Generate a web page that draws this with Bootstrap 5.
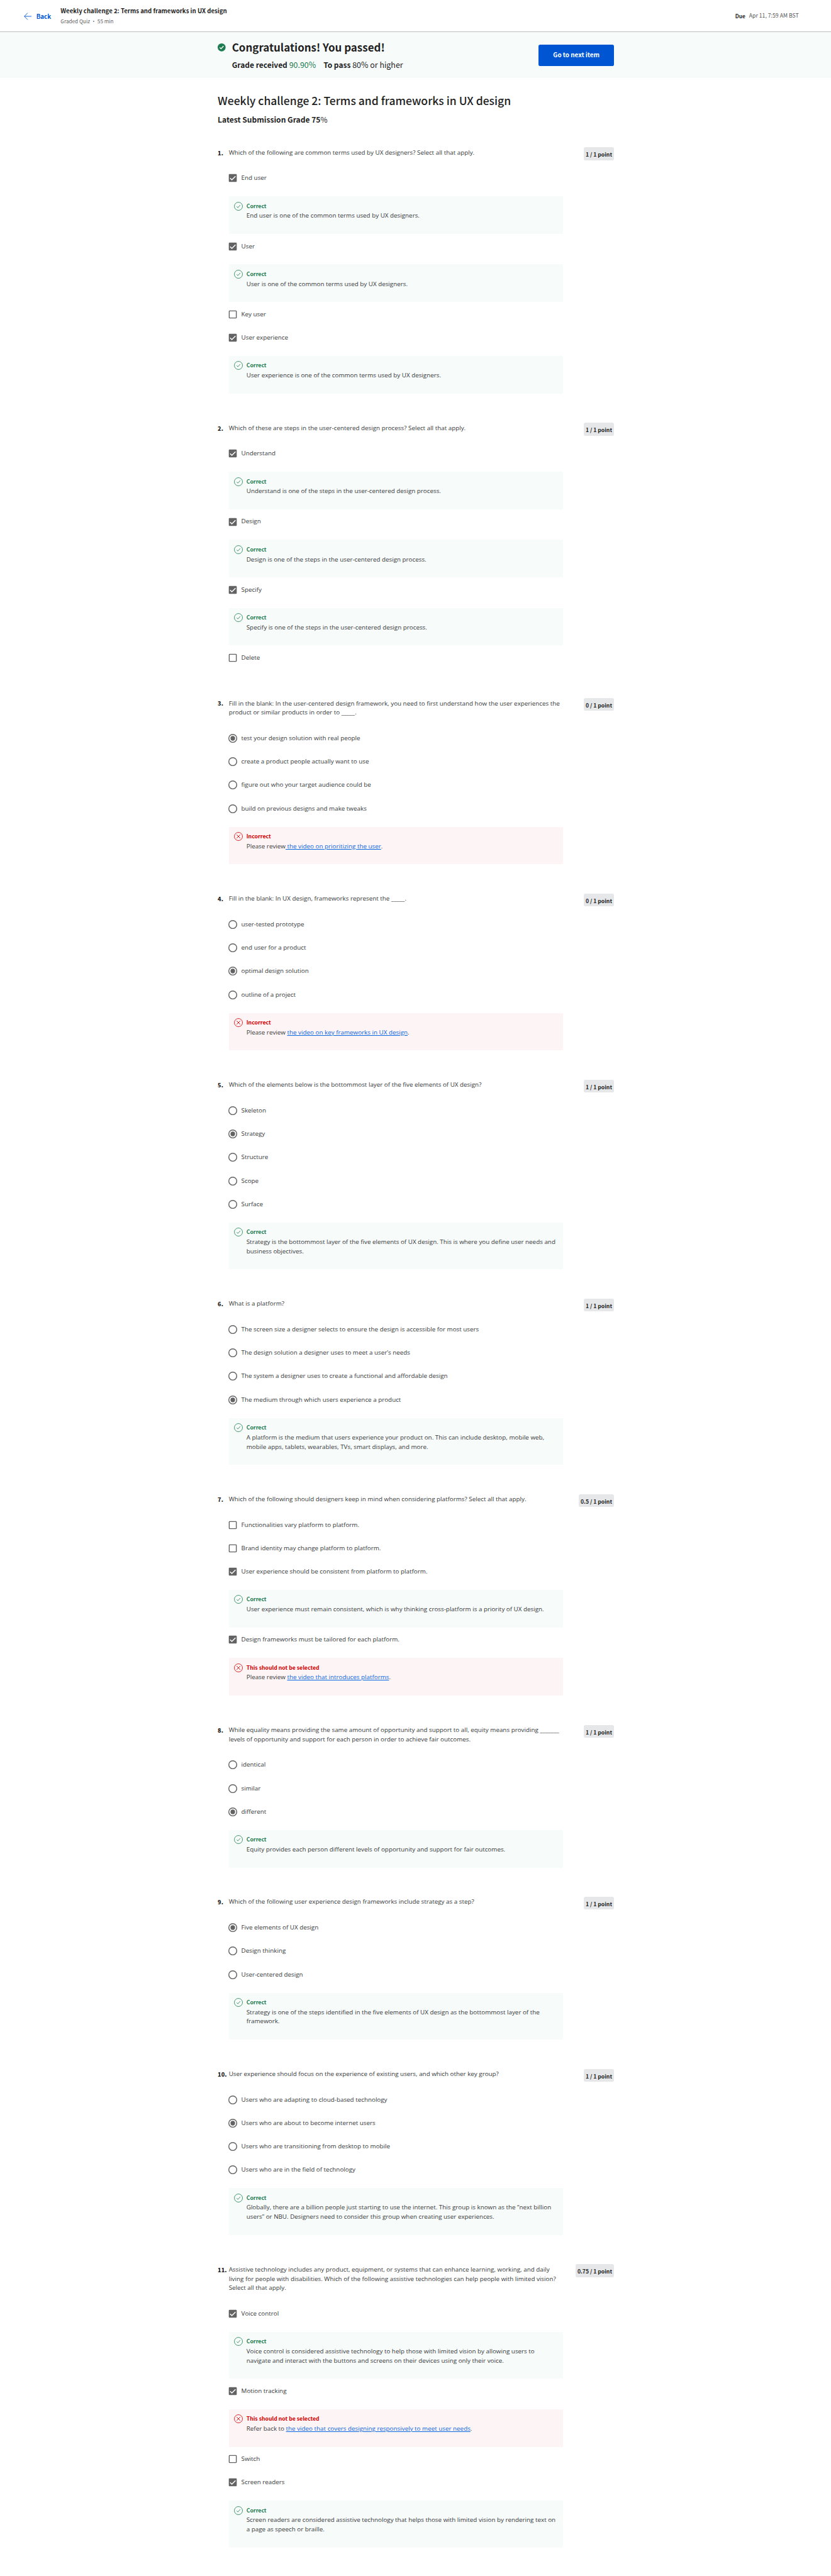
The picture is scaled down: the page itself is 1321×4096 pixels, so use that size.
<!DOCTYPE html>
<html lang="en">
<head>
<meta charset="utf-8">
<meta name="viewport" content="width=device-width, initial-scale=1">
<title>Weekly challenge 2: Terms and frameworks in UX design</title>
<link rel="stylesheet" href="https://cdn.jsdelivr.net/npm/bootstrap@5.3.0/dist/css/bootstrap.min.css">
<style>
:root{--u:.70306px;--head:"Noto Sans CJK SC","Noto Sans",sans-serif}
body{font-family:"Open Sans","Noto Sans",sans-serif;font-size:calc(14*var(--u));line-height:calc(21*var(--u));color:#373a3c;background:#fff;overflow-x:hidden}
.topbar{height:calc(73*var(--u));border-bottom:1px solid #bdbdbd;font-family:var(--head);padding:1px calc(73*var(--u)) 0 calc(54.5*var(--u))}
.back-link{color:#0056d2;font-weight:700;font-size:9.8px;width:calc(82.5*var(--u));gap:calc(10.5*var(--u));padding-top:1px}
.back-link svg{width:calc(17*var(--u));height:calc(17*var(--u))}
.bar-title{font-weight:700;font-size:9.64px;line-height:calc(22*var(--u));color:#1f1f1f}
.bar-sub{font-size:8.17px;line-height:calc(22*var(--u));color:#636363;padding-top:.4px}
.due{font-size:8.7px;color:#555;gap:calc(8.5*var(--u))}
.due b{font-size:8.3px;color:#1f1f1f}
.banner{height:calc(104*var(--u));background:#f7fbfa;font-family:var(--head);color:#1f1f1f}
.page{width:calc(896.5*var(--u));margin-left:calc(491.7*var(--u));padding-left:calc(.6*var(--u))}
.pass-icon{width:calc(18*var(--u));height:calc(18*var(--u));margin:calc(25.5*var(--u)) calc(14.2*var(--u)) 0 0}
.pass-title{font-size:16.95px;font-weight:700;line-height:calc(32*var(--u));margin:calc(18*var(--u)) 0 calc(12*var(--u))}
.pass-line{font-size:12.45px;line-height:calc(24*var(--u));white-space:nowrap}
.pass-line b{font-size:12px;font-weight:700}
.pass-line .got{color:#1d7c50;margin-right:calc(17*var(--u))}
.next-btn{width:calc(170*var(--u));height:calc(48*var(--u));background:#0056d2;border-radius:calc(4*var(--u));font:700 9.88px/1 var(--head);color:#fff;padding:1px 0 0;border:0}
.quiz-title{font:500 17.52px/calc(36*var(--u)) var(--head);color:#1f1f1f;margin:calc(31.5*var(--u)) 0 calc(11.8*var(--u))}
.quiz-grade{font:700 12.06px/calc(28*var(--u)) var(--head);color:#1f1f1f;margin:0 0 calc(48.9*var(--u))}
.quiz-grade span{font-weight:400}
.question{padding-bottom:calc(66.15*var(--u))}
.q-num{width:calc(25*var(--u));flex:none;font:900 9.1px/calc(21*var(--u)) var(--head);color:#1f1f1f;padding-top:calc(2*var(--u));white-space:nowrap}
.q-body{width:calc(756*var(--u));flex:none}
.prompt{margin:0;padding:calc(.7*var(--u)) 0 calc(20.3*var(--u));white-space:nowrap}
.points{height:calc(29*var(--u));background:#e5e7e8;border-radius:calc(4*var(--u));font:700 8.64px/calc(29*var(--u)) var(--head);color:#1f1f1f;padding:1px calc(4.2*var(--u)) 0;white-space:nowrap}
.choice{height:calc(53*var(--u));padding-top:calc(3*var(--u));margin-left:calc(-1.2*var(--u));gap:calc(9.5*var(--u));white-space:nowrap}
.choice svg{width:calc(20*var(--u));height:calc(20*var(--u));flex:none}
.choice span{margin-top:calc(-2*var(--u))}
.feedback{margin-top:calc(16*var(--u));padding:calc(12*var(--u)) 0 calc(31*var(--u)) calc(12*var(--u));gap:calc(8*var(--u));white-space:nowrap}
.feedback svg{width:calc(20*var(--u));height:calc(20*var(--u));flex:none}
.feedback strong{display:block;font:700 8.7px/calc(21*var(--u)) var(--head)}
.feedback p{margin:0}
.ok{background:#f7fbfa}.ok strong,.ok svg{color:#1d7c50}
.bad{background:#fdf4f5}.bad strong,.bad svg{color:#d30001}
.feedback a{color:#0a68e0;text-decoration:underline}
</style>
<script src="https://cdn.jsdelivr.net/npm/bootstrap@5.3.0/dist/js/bootstrap.bundle.min.js"></script>
</head>
<body>
<svg class="d-none">
<symbol id="box1" viewBox="0 0 20 20"><rect x="1" y="1" width="18" height="18" rx="1.8" fill="#636363"/><path d="M4 10.2l4 4L16.2 6" fill="none" stroke="#fff" stroke-width="2.1"/></symbol>
<symbol id="box0" viewBox="0 0 20 20"><rect x="2" y="2" width="16" height="16" rx="1" fill="#fff" stroke="#636363" stroke-width="2"/></symbol>
<symbol id="dot0" viewBox="0 0 20 20"><circle cx="10" cy="10" r="9" fill="#fff" stroke="#636363" stroke-width="2"/></symbol>
<symbol id="dot1" viewBox="0 0 20 20"><circle cx="10" cy="10" r="9" fill="#fff" stroke="#636363" stroke-width="2"/><circle cx="10" cy="10" r="5.2" fill="#636363"/></symbol>
<symbol id="yes" viewBox="0 0 20 20"><g fill="none" stroke="currentColor" stroke-width="1.15"><circle cx="10" cy="10" r="9.2"/><path d="M6 10.4l2.8 2.7 5.2-5.9"/></g></symbol>
<symbol id="no" viewBox="0 0 20 20"><g fill="none" stroke="currentColor" stroke-width="1.2"><circle cx="10" cy="10" r="9.2"/><path d="M5.9 5.9l8.2 8.2M14.1 5.9l-8.2 8.2"/></g></symbol>
</svg>

<header class="topbar d-flex align-items-center">
<a class="back-link d-flex align-items-center text-decoration-none" href="#"><svg viewBox="0 0 17 17" fill="none" stroke="currentColor" stroke-width="1.3"><path d="M17 8.5H1M8.5.8L.9 8.5l7.6 7.7"/></svg>Back</a>
<div><div class="bar-title">Weekly challenge 2: Terms and frameworks in UX design</div><div class="bar-sub">Graded Quiz • 55 min</div></div>
<div class="due d-flex align-items-center ms-auto"><b>Due</b><span>Apr 11, 7:59 AM BST</span></div>
</header>

<div class="banner"><div class="page d-flex h-100">
<svg class="pass-icon" viewBox="0 0 18 18"><circle cx="9" cy="9" r="9" fill="#1d7c50"/><path d="M4.7 9.2l3 3 5.6-6" fill="none" stroke="#fff" stroke-width="2"/></svg>
<div><h2 class="pass-title">Congratulations! You passed!</h2><div class="pass-line"><b>Grade received</b> <span class="got">90.90%</span><b>To pass</b> 80% or higher</div></div>
<button class="btn next-btn ms-auto align-self-center" type="button">Go to next item</button>
</div></div>

<main class="page">
<h1 class="quiz-title">Weekly challenge 2: Terms and frameworks in UX design</h1>
<h2 class="quiz-grade">Latest Submission Grade 75<span>%</span></h2>

<section class="question d-flex align-items-start"><div class="q-num">1.</div><div class="q-body">
<p class="prompt">Which of the following are common terms used by UX designers? Select all that apply.</p>
<div class="choice d-flex align-items-center"><svg><use href="#box1"/></svg><span>End user</span></div>
<div class="feedback ok d-flex"><svg><use href="#yes"/></svg><div><strong>Correct</strong><p>End user is one of the common terms used by UX designers.</p></div></div>
<div class="choice d-flex align-items-center"><svg><use href="#box1"/></svg><span>User</span></div>
<div class="feedback ok d-flex"><svg><use href="#yes"/></svg><div><strong>Correct</strong><p>User is one of the common terms used by UX designers.</p></div></div>
<div class="choice d-flex align-items-center"><svg><use href="#box0"/></svg><span>Key user</span></div>
<div class="choice d-flex align-items-center"><svg><use href="#box1"/></svg><span>User experience</span></div>
<div class="feedback ok d-flex"><svg><use href="#yes"/></svg><div><strong>Correct</strong><p>User experience is one of the common terms used by UX designers.</p></div></div>
</div><div class="points ms-auto">1 / 1 point</div></section>

<section class="question d-flex align-items-start"><div class="q-num">2.</div><div class="q-body">
<p class="prompt">Which of these are steps in the user-centered design process? Select all that apply.</p>
<div class="choice d-flex align-items-center"><svg><use href="#box1"/></svg><span>Understand</span></div>
<div class="feedback ok d-flex"><svg><use href="#yes"/></svg><div><strong>Correct</strong><p>Understand is one of the steps in the user-centered design process.</p></div></div>
<div class="choice d-flex align-items-center"><svg><use href="#box1"/></svg><span>Design</span></div>
<div class="feedback ok d-flex"><svg><use href="#yes"/></svg><div><strong>Correct</strong><p>Design is one of the steps in the user-centered design process.</p></div></div>
<div class="choice d-flex align-items-center"><svg><use href="#box1"/></svg><span>Specify</span></div>
<div class="feedback ok d-flex"><svg><use href="#yes"/></svg><div><strong>Correct</strong><p>Specify is one of the steps in the user-centered design process.</p></div></div>
<div class="choice d-flex align-items-center"><svg><use href="#box0"/></svg><span>Delete</span></div>
</div><div class="points ms-auto">1 / 1 point</div></section>

<section class="question d-flex align-items-start"><div class="q-num">3.</div><div class="q-body">
<p class="prompt">Fill in the blank: In the user-centered design framework, you need to first understand how the user experiences the<br>product or similar products in order to _____.</p>
<div class="choice d-flex align-items-center"><svg><use href="#dot1"/></svg><span>test your design solution with real people</span></div>
<div class="choice d-flex align-items-center"><svg><use href="#dot0"/></svg><span>create a product people actually want to use</span></div>
<div class="choice d-flex align-items-center"><svg><use href="#dot0"/></svg><span>figure out who your target audience could be</span></div>
<div class="choice d-flex align-items-center"><svg><use href="#dot0"/></svg><span>build on previous designs and make tweaks</span></div>
<div class="feedback bad d-flex"><svg><use href="#no"/></svg><div><strong>Incorrect</strong><p>Please review<a href="#"> the video on prioritizing the user</a>.</p></div></div>
</div><div class="points ms-auto">0 / 1 point</div></section>

<section class="question d-flex align-items-start"><div class="q-num">4.</div><div class="q-body">
<p class="prompt">Fill in the blank: In UX design, frameworks represent the _____.</p>
<div class="choice d-flex align-items-center"><svg><use href="#dot0"/></svg><span>user-tested prototype</span></div>
<div class="choice d-flex align-items-center"><svg><use href="#dot0"/></svg><span>end user for a product</span></div>
<div class="choice d-flex align-items-center"><svg><use href="#dot1"/></svg><span>optimal design solution</span></div>
<div class="choice d-flex align-items-center"><svg><use href="#dot0"/></svg><span>outline of a project</span></div>
<div class="feedback bad d-flex"><svg><use href="#no"/></svg><div><strong>Incorrect</strong><p>Please review <a href="#">the video on key frameworks in UX design</a>.</p></div></div>
</div><div class="points ms-auto">0 / 1 point</div></section>

<section class="question d-flex align-items-start"><div class="q-num">5.</div><div class="q-body">
<p class="prompt">Which of the elements below is the bottommost layer of the five elements of UX design?</p>
<div class="choice d-flex align-items-center"><svg><use href="#dot0"/></svg><span>Skeleton</span></div>
<div class="choice d-flex align-items-center"><svg><use href="#dot1"/></svg><span>Strategy</span></div>
<div class="choice d-flex align-items-center"><svg><use href="#dot0"/></svg><span>Structure</span></div>
<div class="choice d-flex align-items-center"><svg><use href="#dot0"/></svg><span>Scope</span></div>
<div class="choice d-flex align-items-center"><svg><use href="#dot0"/></svg><span>Surface</span></div>
<div class="feedback ok d-flex"><svg><use href="#yes"/></svg><div><strong>Correct</strong><p>Strategy is the bottommost layer of the five elements of UX design. This is where you define user needs and<br>business objectives.</p></div></div>
</div><div class="points ms-auto">1 / 1 point</div></section>

<section class="question d-flex align-items-start"><div class="q-num">6.</div><div class="q-body">
<p class="prompt">What is a platform?</p>
<div class="choice d-flex align-items-center"><svg><use href="#dot0"/></svg><span>The screen size a designer selects to ensure the design is accessible for most users</span></div>
<div class="choice d-flex align-items-center"><svg><use href="#dot0"/></svg><span>The design solution a designer uses to meet a user’s needs</span></div>
<div class="choice d-flex align-items-center"><svg><use href="#dot0"/></svg><span>The system a designer uses to create a functional and affordable design</span></div>
<div class="choice d-flex align-items-center"><svg><use href="#dot1"/></svg><span>The medium through which users experience a product</span></div>
<div class="feedback ok d-flex"><svg><use href="#yes"/></svg><div><strong>Correct</strong><p>A platform is the medium that users experience your product on. This can include desktop, mobile web,<br>mobile apps, tablets, wearables, TVs, smart displays, and more.</p></div></div>
</div><div class="points ms-auto">1 / 1 point</div></section>

<section class="question d-flex align-items-start"><div class="q-num">7.</div><div class="q-body">
<p class="prompt">Which of the following should designers keep in mind when considering platforms? Select all that apply.</p>
<div class="choice d-flex align-items-center"><svg><use href="#box0"/></svg><span>Functionalities vary platform to platform.</span></div>
<div class="choice d-flex align-items-center"><svg><use href="#box0"/></svg><span>Brand identity may change platform to platform.</span></div>
<div class="choice d-flex align-items-center"><svg><use href="#box1"/></svg><span>User experience should be consistent from platform to platform.</span></div>
<div class="feedback ok d-flex"><svg><use href="#yes"/></svg><div><strong>Correct</strong><p>User experience must remain consistent, which is why thinking cross-platform is a priority of UX design.</p></div></div>
<div class="choice d-flex align-items-center"><svg><use href="#box1"/></svg><span>Design frameworks must be tailored for each platform.</span></div>
<div class="feedback bad d-flex"><svg><use href="#no"/></svg><div><strong>This should not be selected</strong><p>Please review <a href="#">the video that introduces platforms</a>.</p></div></div>
</div><div class="points ms-auto">0.5 / 1 point</div></section>

<section class="question d-flex align-items-start"><div class="q-num">8.</div><div class="q-body">
<p class="prompt">While equality means providing the same amount of opportunity and support to all, equity means providing _______<br>levels of opportunity and support for each person in order to achieve fair outcomes.</p>
<div class="choice d-flex align-items-center"><svg><use href="#dot0"/></svg><span>identical</span></div>
<div class="choice d-flex align-items-center"><svg><use href="#dot0"/></svg><span>similar</span></div>
<div class="choice d-flex align-items-center"><svg><use href="#dot1"/></svg><span>different</span></div>
<div class="feedback ok d-flex"><svg><use href="#yes"/></svg><div><strong>Correct</strong><p>Equity provides each person different levels of opportunity and support for fair outcomes.</p></div></div>
</div><div class="points ms-auto">1 / 1 point</div></section>

<section class="question d-flex align-items-start"><div class="q-num">9.</div><div class="q-body">
<p class="prompt">Which of the following user experience design frameworks include strategy as a step?</p>
<div class="choice d-flex align-items-center"><svg><use href="#dot1"/></svg><span>Five elements of UX design</span></div>
<div class="choice d-flex align-items-center"><svg><use href="#dot0"/></svg><span>Design thinking</span></div>
<div class="choice d-flex align-items-center"><svg><use href="#dot0"/></svg><span>User-centered design</span></div>
<div class="feedback ok d-flex"><svg><use href="#yes"/></svg><div><strong>Correct</strong><p>Strategy is one of the steps identified in the five elements of UX design as the bottommost layer of the<br>framework.</p></div></div>
</div><div class="points ms-auto">1 / 1 point</div></section>

<section class="question d-flex align-items-start"><div class="q-num">10.</div><div class="q-body">
<p class="prompt">User experience should focus on the experience of existing users, and which other key group?</p>
<div class="choice d-flex align-items-center"><svg><use href="#dot0"/></svg><span>Users who are adapting to cloud-based technology</span></div>
<div class="choice d-flex align-items-center"><svg><use href="#dot1"/></svg><span>Users who are about to become internet users</span></div>
<div class="choice d-flex align-items-center"><svg><use href="#dot0"/></svg><span>Users who are transitioning from desktop to mobile</span></div>
<div class="choice d-flex align-items-center"><svg><use href="#dot0"/></svg><span>Users who are in the field of technology</span></div>
<div class="feedback ok d-flex"><svg><use href="#yes"/></svg><div><strong>Correct</strong><p>Globally, there are a billion people just starting to use the internet. This group is known as the “next billion<br>users” or NBU. Designers need to consider this group when creating user experiences.</p></div></div>
</div><div class="points ms-auto">1 / 1 point</div></section>

<section class="question d-flex align-items-start"><div class="q-num">11.</div><div class="q-body">
<p class="prompt">Assistive technology includes any product, equipment, or systems that can enhance learning, working, and daily<br>living for people with disabilities. Which of the following assistive technologies can help people with limited vision?<br>Select all that apply.</p>
<div class="choice d-flex align-items-center"><svg><use href="#box1"/></svg><span>Voice control</span></div>
<div class="feedback ok d-flex"><svg><use href="#yes"/></svg><div><strong>Correct</strong><p>Voice control is considered assistive technology to help those with limited vision by allowing users to<br>navigate and interact with the buttons and screens on their devices using only their voice.</p></div></div>
<div class="choice d-flex align-items-center"><svg><use href="#box1"/></svg><span>Motion tracking</span></div>
<div class="feedback bad d-flex"><svg><use href="#no"/></svg><div><strong>This should not be selected</strong><p>Refer back to <a href="#">the video that covers designing responsively to meet user needs</a>.</p></div></div>
<div class="choice d-flex align-items-center"><svg><use href="#box0"/></svg><span>Switch</span></div>
<div class="choice d-flex align-items-center"><svg><use href="#box1"/></svg><span>Screen readers</span></div>
<div class="feedback ok d-flex"><svg><use href="#yes"/></svg><div><strong>Correct</strong><p>Screen readers are considered assistive technology that helps those with limited vision by rendering text on<br>a page as speech or braille.</p></div></div>
</div><div class="points ms-auto">0.75 / 1 point</div></section>
</main>
</body>
</html>
